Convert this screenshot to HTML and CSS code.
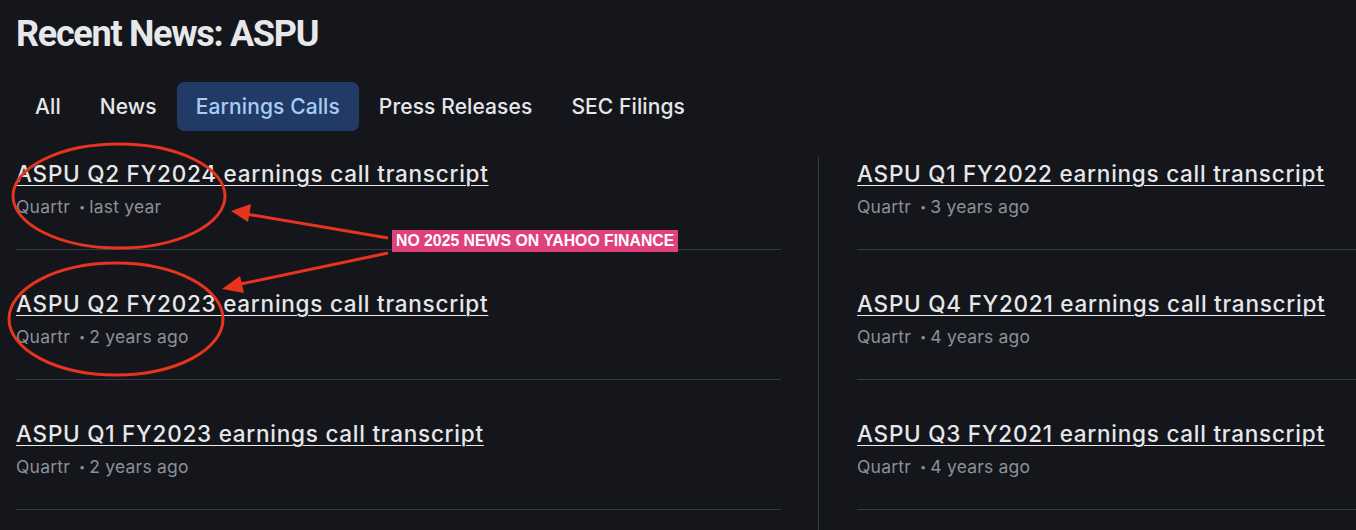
FILE: index.html
```html
<!DOCTYPE html>
<html lang="en">
<head>
<meta charset="utf-8">
<title>Recent News: ASPU</title>
<link rel="stylesheet" href="styles.css">
</head>
<body>
<div class="page">
  <h1 class="title">Recent News: ASPU</h1>
  <nav class="tabs">
    <a class="tab">All</a>
    <a class="tab">News</a>
    <a class="tab active">Earnings Calls</a>
    <a class="tab">Press Releases</a>
    <a class="tab">SEC Filings</a>
  </nav>
  <div class="grid">
    <ul class="col col-left">
      <li class="item"><a class="item-title">ASPU Q2 FY2024 earnings call transcript</a><div class="meta"><span>Quartr</span><span class="dot">•</span><span>last year</span></div></li>
      <li class="item"><a class="item-title">ASPU Q2 FY2023 earnings call transcript</a><div class="meta"><span>Quartr</span><span class="dot">•</span><span>2 years ago</span></div></li>
      <li class="item"><a class="item-title">ASPU Q1 FY2023 earnings call transcript</a><div class="meta"><span>Quartr</span><span class="dot">•</span><span>2 years ago</span></div></li>
    </ul>
    <ul class="col col-right">
      <li class="item"><a class="item-title">ASPU Q1 FY2022 earnings call transcript</a><div class="meta"><span>Quartr</span><span class="dot">•</span><span>3 years ago</span></div></li>
      <li class="item"><a class="item-title">ASPU Q4 FY2021 earnings call transcript</a><div class="meta"><span>Quartr</span><span class="dot">•</span><span>4 years ago</span></div></li>
      <li class="item"><a class="item-title">ASPU Q3 FY2021 earnings call transcript</a><div class="meta"><span>Quartr</span><span class="dot">•</span><span>4 years ago</span></div></li>
    </ul>
  </div>
</div>
<svg class="annot" width="1356" height="530" viewBox="0 0 1356 530">
  <g fill="none" stroke="#e8341f" stroke-width="3">
    <ellipse cx="119" cy="196" rx="106" ry="52"/>
    <ellipse cx="116" cy="319" rx="107" ry="56"/>
    <line x1="388" y1="238" x2="246" y2="214"/>
    <line x1="388" y1="253" x2="236" y2="285"/>
  </g>
  <g fill="#e8341f">
    <polygon points="231,211 251,204 248,222"/>
    <polygon points="222,289 240,276 244,293"/>
  </g>
</svg>
<div class="label">NO 2025 NEWS ON YAHOO FINANCE</div>
</body>
</html>
```

FILE: styles.css
```css
html, body {
  margin: 0;
  padding: 0;
  background: #14161c;
}
body {
  width: 1356px;
  height: 530px;
  overflow: hidden;
  position: relative;
  font-family: Inter, "Noto Sans", sans-serif;
  color: #e6e7ea;
}
.page {
  padding: 0 0 0 16px;
}
.title {
  margin: 0;
  padding-top: 14px;
  height: 46px;
  font-family: Roboto, "Liberation Sans", sans-serif;
  font-weight: 700;
  font-size: 36px;
  line-height: 40px;
  letter-spacing: -1.3px;
  color: #e7e8ea;
}
.tabs {
  display: flex;
  gap: 1px;
  margin-top: 22px;
  height: 49px;
}
.tab {
  display: flex;
  align-items: center;
  padding: 0 19px;
  font-size: 21px;
  font-weight: 500;
  letter-spacing: 0.1px;
  color: #e6e7ea;
  border-radius: 7px;
}
.tab.active {
  background: #223a66;
  color: #a7cdf7;
}
.grid {
  display: grid;
  grid-template-columns: 765px 1fr;
  margin-top: 26px;
}
.col {
  list-style: none;
  margin: 0;
  padding: 0;
}
.col-right {
  margin-left: 37px;
  padding-left: 38px;
  padding-bottom: 30px;
  border-left: 1px solid #363a42;
}
.item {
  padding: 40px 0 31px;
  border-bottom: 1px solid #363a42;
}
.item:first-child {
  padding-top: 3px;
}
.item-title {
  display: block;
  font-size: 22.5px;
  line-height: 28px;
  font-weight: 500;
  letter-spacing: 0.75px;
  color: #e6e7ea;
  text-decoration: underline;
  text-decoration-thickness: 1px;
  text-underline-offset: 3px;
  white-space: nowrap;
}
.meta {
  margin-top: 8px;
  font-size: 17.5px;
  line-height: 22px;
  letter-spacing: 0.2px;
  color: #8b9098;
  display: flex;
  align-items: center;
}
.dot {
  font-size: 11px;
  margin: 0 4px 0 9px;
}
.annot {
  position: absolute;
  left: 0;
  top: 0;
  pointer-events: none;
}
.label {
  position: absolute;
  left: 392px;
  top: 230px;
  height: 22px;
  padding: 0 4px;
  background: #e0407b;
  color: #ffffff;
  font-family: "Liberation Sans", Arial, sans-serif;
  font-weight: 700;
  font-size: 15.8px;
  line-height: 22px;
  white-space: nowrap;
}
```
